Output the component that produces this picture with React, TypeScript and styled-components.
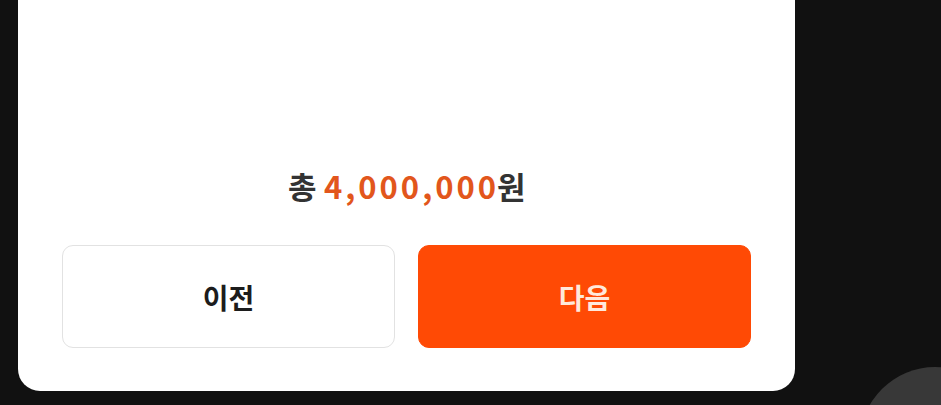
import React from 'react'
import styled, { createGlobalStyle } from 'styled-components'

const GlobalStyle = createGlobalStyle`
  html, body {
    margin: 0;
    padding: 0;
    background: #111111;
    overflow: hidden;
  }
  body {
    font-family: "Noto Sans CJK KR", "Noto Sans", sans-serif;
  }
`

const Screen = styled.div`
  position: relative;
  width: 941px;
  height: 405px;
  background: #111111;
  overflow: hidden;
`

const Sheet = styled.section`
  margin-left: 18px;
  width: 777px;
  height: 391px;
  background: #ffffff;
  border-radius: 0 0 22px 22px;
  display: flex;
  flex-direction: column;
  justify-content: flex-end;
  align-items: stretch;
  box-sizing: border-box;
  padding: 0 44px 43px;
`

const Total = styled.p`
  margin: 0 0 39px;
  text-align: center;
  font-size: 31px;
  font-weight: 700;
  line-height: 40px;
  color: #333333;
  letter-spacing: -0.5px;
`

const Amount = styled.span`
  color: #e2561c;
  letter-spacing: 3px;
  margin-left: 8px;
  margin-right: -2px;
`

const Actions = styled.div`
  display: grid;
  grid-template-columns: 1fr 1fr;
  gap: 23px;
`

const Button = styled.button<{ $primary?: boolean }>`
  height: 103px;
  border-radius: 11px;
  border: 1.5px solid ${(p) => (p.$primary ? '#ff4a05' : '#e2e2e2')};
  background: ${(p) => (p.$primary ? '#ff4a05' : '#ffffff')};
  color: ${(p) => (p.$primary ? '#ffe9dc' : '#1c1c1c')};
  font-family: "Noto Sans CJK KR", "Noto Sans", sans-serif;
  font-size: 28px;
  font-weight: 700;
  cursor: pointer;
`

const FloatingBubble = styled.div`
  position: absolute;
  left: 860px;
  top: 367px;
  width: 150px;
  height: 150px;
  border-radius: 50%;
  background: #383838;
`

export default function App(): JSX.Element {
  return (
    <>
      <GlobalStyle />
      <Screen>
        <Sheet>
          <Total>
            총<Amount>4,000,000</Amount>원
          </Total>
          <Actions>
            <Button>이전</Button>
            <Button $primary>다음</Button>
          </Actions>
        </Sheet>
        <FloatingBubble />
      </Screen>
    </>
  )
}
